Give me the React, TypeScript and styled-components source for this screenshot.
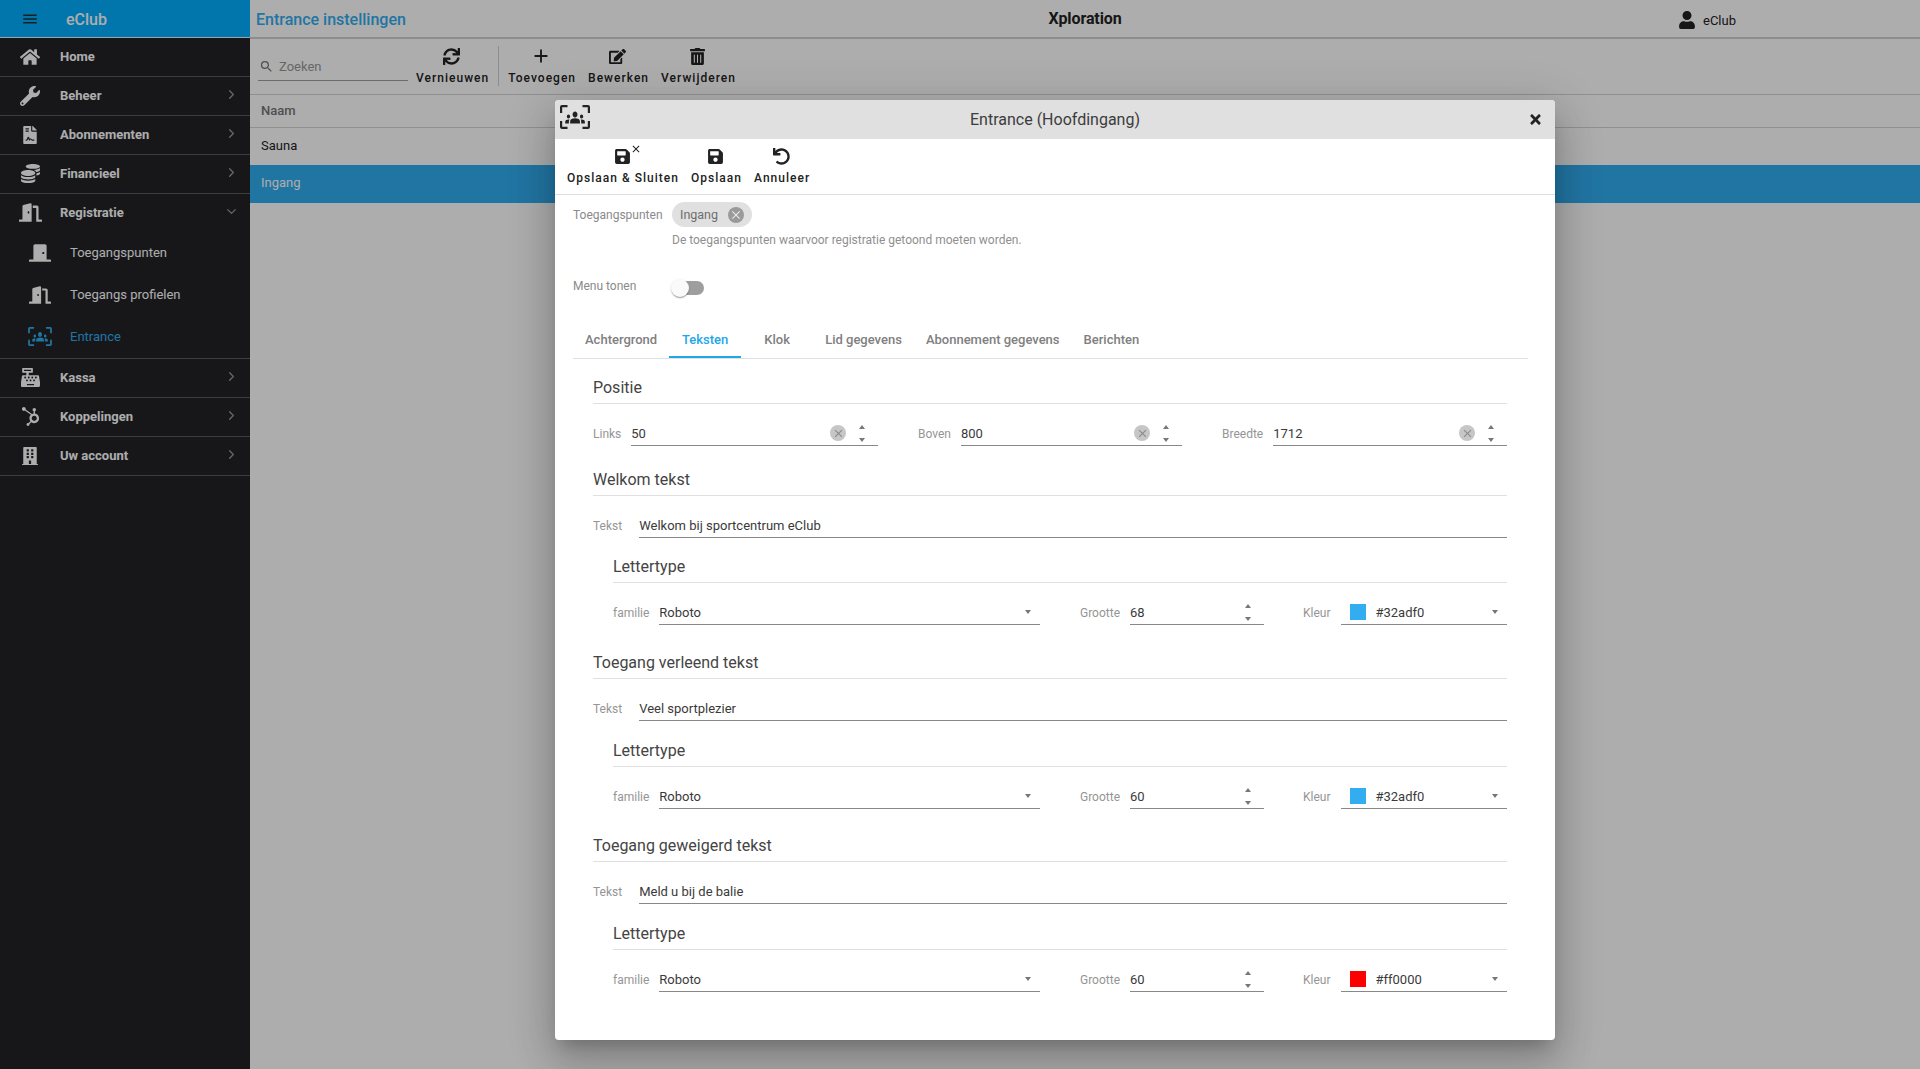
import React from "react";
import styled, { createGlobalStyle } from "styled-components";
import {
  FaBuilding, FaCashRegister, FaCoins, FaDoorClosed, FaDoorOpen, FaEdit,
  FaFileContract, FaHome, FaHubspot, FaSave, FaSync, FaTimes, FaTrashAlt, FaUndo, FaUser, FaWrench,
} from "react-icons/fa";
import { FiChevronDown, FiChevronRight } from "react-icons/fi";
import { MdAdd, MdClose, MdMenu, MdSearch } from "react-icons/md";

const Global = createGlobalStyle`
  html, body { margin: 0; padding: 0; }
  body { font-family: Roboto, "Liberation Sans", sans-serif; background: #fff; }
  * { box-sizing: border-box; }
`;

const Page = styled.div`
  position: relative;
  width: 1920px;
  height: 1069px;
  overflow: hidden;
  display: flex;
`;

const Sidebar = styled.aside`
  width: 250px;
  flex: none;
  background: #232327;
  color: #fff;
`;

const Brand = styled.div`
  height: 38px;
  background: #00aeff;
  border-bottom: 1px solid #e4f4ff;
  display: flex;
  align-items: center;
  padding-left: 21px;
  color: #2c2c2c;
  font-size: 16px;
  font-weight: 500;
  span { color: #fff; margin-left: 27px; padding-top: 2px; }
`;

const NavItem = styled.div<{ $open?: boolean }>`
  height: 39px;
  display: flex;
  align-items: center;
  font-size: 13px;
  font-weight: 700;
  border-bottom: ${(p) => (p.$open ? "none" : "1px solid #5a5a5a")};
  padding: 0 11px ${(p) => (p.$open ? 2 : 0)}px 0;
`;

const NavIcon = styled.span<{ $size?: number }>`
  width: 60px;
  flex: none;
  display: flex;
  justify-content: center;
  margin-top: -1px;
  svg { font-size: ${(p) => p.$size ?? 20}px; }
`;

const NavLabel = styled.span`
  flex: 1;
  margin-top: -1px;
`;

const Chevron = styled.span`
  color: #9a9a9a;
  display: flex;
  margin-top: -3px;
  svg { font-size: 15px; }
`;

const SubItem = styled.div<{ $active?: boolean }>`
  height: 42px;
  display: flex;
  align-items: center;
  font-size: 13px;
  color: ${(p) => (p.$active ? "#32adf0" : "#fff")};
  border-bottom: ${(p) => (p.$active ? "1px solid #5a5a5a" : "none")};
  padding-bottom: ${(p) => (p.$active ? 2 : 3)}px;
`;

const SubIcon = styled.span`
  width: 70px;
  padding-left: 10px;
  flex: none;
  display: flex;
  justify-content: center;
  svg { font-size: 22px; }
`;

const Main = styled.main`
  flex: 1;
  min-width: 0;
  background: #fff;
`;

const TopBar = styled.header`
  height: 39px;
  border-bottom: 2px solid #d0d0d0;
  display: grid;
  grid-template-columns: 1fr auto 1fr;
  align-items: center;
  padding: 0 6px;
`;

const PageTitle = styled.div`
  color: #32adf0;
  font-size: 16px;
  font-weight: 500;
  padding-top: 2px;
`;

const AppName = styled.div`
  color: #222;
  font-size: 16px;
  font-weight: 700;
  letter-spacing: -0.1px;
`;

const UserBox = styled.div`
  display: flex;
  align-items: center;
  justify-content: flex-end;
  gap: 7px;
  padding-right: 178px;
  padding-top: 3px;
  font-size: 13px;
  color: #222;
  svg { font-size: 18px; }
`;

const ListToolbar = styled.div`
  height: 56px;
  border-bottom: 1px solid #d4d4d4;
  display: flex;
  align-items: flex-start;
  padding-left: 8px;
`;

const Search = styled.div`
  width: 150px;
  height: 26px;
  margin-top: 16px;
  margin-right: 2px;
  border-bottom: 1px solid #a0a0a0;
  display: flex;
  align-items: center;
  gap: 5px;
  padding: 0 0 2px 1px;
  color: #999;
  font-size: 13px;
  svg { font-size: 15px; color: #777; }
`;

const ToolDivider = styled.div`
  width: 1px;
  height: 40px;
  margin: 7px 3px 0;
  background: #d0d0d0;
`;

const ToolButton = styled.div`
  display: flex;
  flex-direction: column;
  align-items: center;
  padding: 9px 6px 0;
  color: #222;
`;

const ToolIcon = styled.span`
  position: relative;
  height: 16px;
  margin-right: 2px;
  display: flex;
  align-items: center;
  justify-content: center;
  svg { font-size: 17px; }
`;

const CloseMark = styled.span`
  position: absolute;
  right: -11px;
  top: -5px;
  display: flex;
  svg { font-size: 12px; }
`;

const ToolText = styled.span`
  margin-top: 7px;
  font-size: 12px;
  line-height: 14px;
  font-weight: 500;
  letter-spacing: 1.02px;
  white-space: nowrap;
`;

const ColHead = styled.div`
  height: 33px;
  border-bottom: 1px solid #d4d4d4;
  padding: 0 11px 1px;
  display: flex;
  align-items: center;
  color: #757575;
  font-size: 13px;
  font-weight: 500;
`;

const DataRow = styled.div<{ $selected?: boolean }>`
  height: ${(p) => (p.$selected ? 38 : 37)}px;
  padding: 0 11px ${(p) => (p.$selected ? 3 : 2)}px;
  display: flex;
  align-items: center;
  font-size: 13px;
  background: ${(p) => (p.$selected ? "#32adf0" : "transparent")};
  color: ${(p) => (p.$selected ? "#fff" : "#222")};
`;

const Dim = styled.div`
  position: absolute;
  inset: 0;
  background: rgba(0, 0, 0, 0.32);
`;

const Dialog = styled.section`
  position: absolute;
  left: 555px;
  top: 100px;
  width: 1000px;
  height: 940px;
  background: #fff;
  border-radius: 4px;
  overflow: hidden;
`;

const DialogShadow = styled.div`
  position: absolute;
  left: 555px;
  top: 100px;
  width: 1000px;
  height: 940px;
  border-radius: 4px;
  box-shadow: 0 11px 15px -7px rgba(0,0,0,.2), 0 24px 38px 3px rgba(0,0,0,.14), 0 9px 46px 8px rgba(0,0,0,.12);
`;

const DialogHead = styled.div`
  height: 39px;
  background: #e0e0e0;
  display: grid;
  grid-template-columns: 1fr auto 1fr;
  align-items: center;
  padding: 0 12px 1px;
  color: #3c3c3c;
  font-size: 16px;
`;

const HeadIcon = styled.span`
  display: flex;
  color: #222;
  margin: -4px 0 0 -7px;
`;

const HeadClose = styled.span`
  display: flex;
  justify-content: flex-end;
  color: #222;
  svg { font-size: 15px; }
`;

const DialogToolbar = styled.div`
  height: 56px;
  border-bottom: 1px solid #e0e0e0;
  display: flex;
  align-items: flex-start;
  padding-left: 6px;
`;

const DialogBody = styled.div`
  padding: 7px 27px 0 18px;
`;

const TopRow = styled.div<{ $center?: boolean }>`
  display: flex;
  align-items: ${(p) => (p.$center ? "center" : "flex-start")};
`;

const TopLabel = styled.span`
  width: 99px;
  flex: none;
  font-size: 12px;
  line-height: 16px;
  color: #8a8a8a;
`;

const Chip = styled.span`
  height: 25px;
  width: 80px;
  border-radius: 13px;
  background: #e0e0e0;
  display: flex;
  align-items: center;
  padding-left: 8px;
  gap: 10px;
  font-size: 12.5px;
  color: #6e6e6e;
`;

const ChipClose = styled.span<{ $soft?: boolean }>`
  width: 16px;
  height: 16px;
  border-radius: 50%;
  flex: none;
  display: flex;
  align-items: center;
  justify-content: center;
  background: ${(p) => (p.$soft ? "#c6c6c6" : "#9a9a9a")};
  color: ${(p) => (p.$soft ? "#8a8a8a" : "#e8e8e8")};
  svg { font-size: ${(p) => (p.$soft ? 13 : 14)}px; }
`;

const Hint = styled.div`
  margin: 5px 0 0 99px;
  font-size: 12px;
  line-height: 16px;
  color: #8f8f8f;
`;

const ToggleRow = styled(TopRow)`
  margin-top: 30px;
`;

const ToggleTrack = styled.span`
  position: relative;
  width: 32px;
  height: 14px;
  margin-top: 3px;
  border-radius: 7px;
  background: #9e9e9e;
`;

const ToggleThumb = styled.span`
  position: absolute;
  left: -1px;
  top: -2px;
  width: 18px;
  height: 18px;
  border-radius: 50%;
  background: #fafafa;
  box-shadow: 0 2px 1px -1px rgba(0,0,0,.2), 0 1px 1px 0 rgba(0,0,0,.14), 0 1px 3px 0 rgba(0,0,0,.12);
`;

const TabBar = styled.div`
  margin-top: 16px;
  display: flex;
  border-bottom: 1px solid #e0e0e0;
`;

const Tab = styled.div<{ $active?: boolean }>`
  height: 47px;
  min-width: 72px;
  padding: 9px 12px 0;
  display: flex;
  align-items: center;
  justify-content: center;
  font-size: 13px;
  font-weight: 500;
  color: ${(p) => (p.$active ? "#22a6ea" : "#808080")};
  box-shadow: ${(p) => (p.$active ? "inset 0 -2px 0 #22a6ea" : "none")};
`;

const Panel = styled.div`
  padding: 0 21px 0 20px;
`;

const Heading = styled.div<{ $gapTop?: number; $indent?: boolean }>`
  margin-top: ${(p) => p.$gapTop ?? 0}px;
  margin-left: ${(p) => (p.$indent ? 20 : 0)}px;
  font-size: 16px;
  line-height: 20px;
  padding-bottom: 5px;
  border-bottom: 1px solid #e0e0e0;
  color: #444;
`;

const FieldRow = styled.div<{ $indent?: boolean }>`
  height: 42px;
  display: flex;
  align-items: flex-end;
  padding-left: ${(p) => (p.$indent ? 20 : 0)}px;
`;

const Field = styled.div<{ $w?: number; $ml?: number }>`
  display: flex;
  align-items: flex-end;
  flex: ${(p) => (p.$w ? "none" : "1")};
  width: ${(p) => (p.$w ? `${p.$w}px` : "auto")};
  margin-left: ${(p) => p.$ml ?? 0}px;
`;

const FieldLabel = styled.span<{ $gap?: number }>`
  font-size: 12px;
  line-height: 25px;
  color: #959595;
  margin-right: ${(p) => p.$gap ?? 10}px;
  margin-bottom: -1px;
  flex: none;
`;

const Control = styled.div`
  flex: 1;
  min-width: 0;
  height: 25px;
  border-bottom: 1px solid #888;
  display: flex;
  align-items: center;
  font-size: 13px;
  color: #3a3a3a;
`;

const Value = styled.span`
  flex: 1;
`;

const Spinner = styled.span`
  width: 7px;
  height: 17px;
  margin-right: 12px;
  margin-left: 13px;
  display: flex;
  flex-direction: column;
  justify-content: space-between;
`;

const Triangle = styled.i<{ $down?: boolean }>`
  display: block;
  width: 0;
  height: 0;
  border-left: 3.5px solid transparent;
  border-right: 3.5px solid transparent;
  border-bottom: ${(p) => (p.$down ? "none" : "4px solid #777")};
  border-top: ${(p) => (p.$down ? "4px solid #777" : "none")};
`;

const SelectArrow = styled(Triangle)`
  margin-right: 9px;
`;

const Swatch = styled.span<{ $color: string }>`
  width: 16px;
  height: 16px;
  margin: 0 10px 0 9px;
  flex: none;
  background: ${(p) => p.$color};
  box-shadow: 0 0 0 1px rgba(255, 255, 255, 0.6);
`;

const groupsPath =
  "M12 12.75c1.63 0 3.07.39 4.24.9 1.08.48 1.76 1.56 1.76 2.73V18H6v-1.61c0-1.18.68-2.26 1.76-2.73 1.17-.52 2.61-.91 4.24-.91zM4 13c1.1 0 2-.9 2-2s-.9-2-2-2-2 .9-2 2 .9 2 2 2zm1.13 1.1c-.37-.06-.74-.1-1.13-.1-.99 0-1.93.21-2.78.58C.48 14.9 0 15.62 0 16.43V18h4.5v-1.61c0-.83.23-1.61.63-2.29zM20 13c1.1 0 2-.9 2-2s-.9-2-2-2-2 .9-2 2 .9 2 2 2zm4 3.43c0-.81-.48-1.53-1.22-1.85-.85-.37-1.79-.58-2.78-.58-.39 0-.76.04-1.13.1.4.68.63 1.46.63 2.29V18H24v-1.57zM12 6c1.66 0 3 1.34 3 3s-1.34 3-3 3-3-1.34-3-3 1.34-3 3-3z";

const FaceGroupIcon = ({ width, height }: { width: number; height: number }) => (
  <svg width={width} height={height} viewBox="0 0 30 24" fill="none">
    <path
      d="M1.1 8V2.1Q1.1 1.1 2.1 1.1H7.5M22.5 1.1H27.9Q28.9 1.1 28.9 2.1V8M1.1 16V21.9Q1.1 22.9 2.1 22.9H7.5M22.5 22.9H27.9Q28.9 22.9 28.9 21.9V16"
      stroke="currentColor"
      strokeWidth="2.2"
    />
    <g transform="translate(5.2 0.4) scale(0.82 1)">
      <path d={groupsPath} fill="currentColor" />
    </g>
  </svg>
);

const nav1 = [
  { icon: <FaHome />, label: "Home", chevron: false, size: 20 },
  { icon: <FaWrench />, label: "Beheer", chevron: true, size: 20 },
  { icon: <FaFileContract />, label: "Abonnementen", chevron: true, size: 18 },
  { icon: <FaCoins />, label: "Financieel", chevron: true, size: 19 },
];
const nav2 = [
  { icon: <FaCashRegister />, label: "Kassa", size: 19 },
  { icon: <FaHubspot />, label: "Koppelingen", size: 19 },
  { icon: <FaBuilding />, label: "Uw account", size: 18 },
];

const Clear = () => (
  <ChipClose $soft>
    <MdClose />
  </ChipClose>
);

const Spin = () => (
  <Spinner>
    <Triangle />
    <Triangle $down />
  </Spinner>
);

const FontRow = ({ size, color, hex }: { size: string; color: string; hex: string }) => (
  <FieldRow $indent>
    <Field $w={427}>
      <FieldLabel>familie</FieldLabel>
      <Control>
        <Value>Roboto</Value>
        <SelectArrow $down />
      </Control>
    </Field>
    <Field $w={184} $ml={40}>
      <FieldLabel>Grootte</FieldLabel>
      <Control>
        <Value>{size}</Value>
        <Spin />
      </Control>
    </Field>
    <Field $w={204} $ml={39}>
      <FieldLabel>Kleur</FieldLabel>
      <Control>
        <Swatch $color={color} />
        <Value>{hex}</Value>
        <SelectArrow $down />
      </Control>
    </Field>
  </FieldRow>
);

const TextSection = ({ title, text, size, color, hex, gapTop, subGap }: {
  title: string; text: string; size: string; color: string; hex: string; gapTop: number; subGap: number;
}) => (
  <>
    <Heading $gapTop={gapTop}>{title}</Heading>
    <FieldRow>
      <Field>
        <FieldLabel $gap={17}>Tekst</FieldLabel>
        <Control>
          <Value>{text}</Value>
        </Control>
      </Field>
    </FieldRow>
    <Heading $indent $gapTop={subGap}>Lettertype</Heading>
    <FontRow size={size} color={color} hex={hex} />
  </>
);

export default function App() {
  return (
    <Page>
      <Global />
      <Sidebar>
        <Brand>
          <MdMenu size={18} />
          <span>eClub</span>
        </Brand>
        {nav1.map((n) => (
          <NavItem key={n.label}>
            <NavIcon $size={n.size}>{n.icon}</NavIcon>
            <NavLabel>{n.label}</NavLabel>
            {n.chevron && <Chevron><FiChevronRight /></Chevron>}
          </NavItem>
        ))}
        <NavItem $open>
          <NavIcon $size={23}><FaDoorOpen /></NavIcon>
          <NavLabel>Registratie</NavLabel>
          <Chevron><FiChevronDown /></Chevron>
        </NavItem>
        <SubItem>
          <SubIcon><FaDoorClosed /></SubIcon>
          Toegangspunten
        </SubItem>
        <SubItem>
          <SubIcon><FaDoorOpen /></SubIcon>
          Toegangs profielen
        </SubItem>
        <SubItem $active>
          <SubIcon><FaceGroupIcon width={24} height={19} /></SubIcon>
          Entrance
        </SubItem>
        {nav2.map((n) => (
          <NavItem key={n.label}>
            <NavIcon $size={n.size}>{n.icon}</NavIcon>
            <NavLabel>{n.label}</NavLabel>
            <Chevron><FiChevronRight /></Chevron>
          </NavItem>
        ))}
      </Sidebar>
      <Main>
        <TopBar>
          <PageTitle>Entrance instellingen</PageTitle>
          <AppName>Xploration</AppName>
          <UserBox><FaUser />eClub</UserBox>
        </TopBar>
        <ListToolbar>
          <Search><MdSearch />Zoeken</Search>
          <ToolButton><ToolIcon><FaSync /></ToolIcon><ToolText>Vernieuwen</ToolText></ToolButton>
          <ToolDivider />
          <ToolButton><ToolIcon><MdAdd size={22} /></ToolIcon><ToolText>Toevoegen</ToolText></ToolButton>
          <ToolButton><ToolIcon><FaEdit /></ToolIcon><ToolText>Bewerken</ToolText></ToolButton>
          <ToolButton><ToolIcon><FaTrashAlt /></ToolIcon><ToolText>Verwijderen</ToolText></ToolButton>
        </ListToolbar>
        <ColHead>Naam</ColHead>
        <DataRow>Sauna</DataRow>
        <DataRow $selected>Ingang</DataRow>
      </Main>
      <Dim />
      <DialogShadow />
      <Dialog>
        <DialogHead>
          <HeadIcon><FaceGroupIcon width={30} height={24} /></HeadIcon>
          <span>Entrance (Hoofdingang)</span>
          <HeadClose><FaTimes /></HeadClose>
        </DialogHead>
        <DialogToolbar>
          <ToolButton>
            <ToolIcon>
              <FaSave />
              <CloseMark><MdClose /></CloseMark>
            </ToolIcon>
            <ToolText>Opslaan &amp; Sluiten</ToolText>
          </ToolButton>
          <ToolButton><ToolIcon><FaSave /></ToolIcon><ToolText>Opslaan</ToolText></ToolButton>
          <ToolButton><ToolIcon><FaUndo /></ToolIcon><ToolText>Annuleer</ToolText></ToolButton>
        </DialogToolbar>
        <DialogBody>
          <TopRow $center>
            <TopLabel>Toegangspunten</TopLabel>
            <Chip>
              Ingang
              <ChipClose><MdClose /></ChipClose>
            </Chip>
          </TopRow>
          <Hint>De toegangspunten waarvoor registratie getoond moeten worden.</Hint>
          <ToggleRow>
            <TopLabel>Menu tonen</TopLabel>
            <ToggleTrack><ToggleThumb /></ToggleTrack>
          </ToggleRow>
          <TabBar>
            <Tab>Achtergrond</Tab>
            <Tab $active>Teksten</Tab>
            <Tab>Klok</Tab>
            <Tab>Lid gegevens</Tab>
            <Tab>Abonnement gegevens</Tab>
            <Tab>Berichten</Tab>
          </TabBar>
          <Panel>
            <Heading $gapTop={19}>Positie</Heading>
            <FieldRow>
              <Field $w={285}>
                <FieldLabel>Links</FieldLabel>
                <Control><Value>50</Value><Clear /><Spin /></Control>
              </Field>
              <Field $w={264} $ml={40}>
                <FieldLabel>Boven</FieldLabel>
                <Control><Value>800</Value><Clear /><Spin /></Control>
              </Field>
              <Field $w={285} $ml={40}>
                <FieldLabel>Breedte</FieldLabel>
                <Control><Value>1712</Value><Clear /><Spin /></Control>
              </Field>
            </FieldRow>
            <TextSection gapTop={24} subGap={19} title="Welkom tekst" text="Welkom bij sportcentrum eClub" size="68" color="#32adf0" hex="#32adf0" />
            <TextSection gapTop={28} subGap={20} title="Toegang verleend tekst" text="Veel sportplezier" size="60" color="#32adf0" hex="#32adf0" />
            <TextSection gapTop={27} subGap={20} title="Toegang geweigerd tekst" text="Meld u bij de balie" size="60" color="#ff0000" hex="#ff0000" />
          </Panel>
        </DialogBody>
      </Dialog>
    </Page>
  );
}
